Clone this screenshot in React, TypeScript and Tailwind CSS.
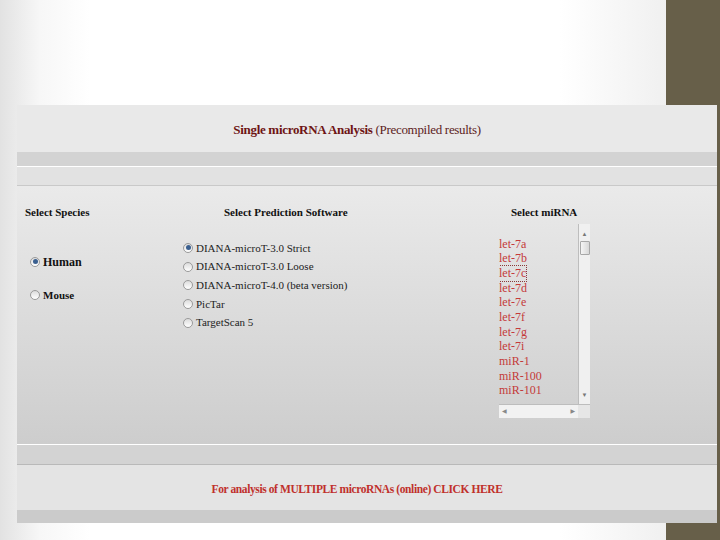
import React from 'react';

const serif = { fontFamily: '"Liberation Serif", "DejaVu Serif", serif' };

const Radio: React.FC<{ checked?: boolean }> = ({ checked }) => (
  <span className="inline-flex h-[10px] w-[10px] shrink-0 items-center justify-center rounded-full border border-[#9a9a9a] bg-[linear-gradient(#dcdcdc,#ffffff)]">
    {checked && <span className="h-[5px] w-[5px] rounded-full bg-[#3a5f8f]" />}
  </span>
);

const software = [
  'DIANA-microT-3.0 Strict',
  'DIANA-microT-3.0 Loose',
  'DIANA-microT-4.0 (beta version)',
  'PicTar',
  'TargetScan 5',
];

const mirnas = ['let-7a', 'let-7b', 'let-7c', 'let-7d', 'let-7e', 'let-7f', 'let-7g', 'let-7i', 'miR-1', 'miR-100', 'miR-101'];

const App: React.FC = () => {
  return (
    <div
      className="h-[540px] w-[720px] overflow-hidden bg-[linear-gradient(to_right,#e2e2e2_0px,#f7f7f7_40px,#ffffff_90px,#ffffff_560px,#f0f0f0_666px,#675f49_666px)] pt-[105px] pl-[17px]"
      style={serif}
    >
      <div className="w-[700px]">
        {/* header */}
        <div className="flex h-[47px] items-center justify-center bg-[#e9e9e9] pt-[3px] pr-[20px] text-[13px] tracking-[-0.3px] text-[#6e1414]">
          <span className="font-bold">Single microRNA Analysis</span>
          <span className="ml-[3px] text-[#5c1c1c]">(Precompiled results)</span>
        </div>
        <div className="h-[14px] bg-[#d3d3d3]" />
        <div className="h-[20px] border-t border-white border-b border-b-[#c9c9c9] bg-[#e2e2e2]" />

        {/* main */}
        <div className="flex h-[258px] bg-[linear-gradient(#eaeaea,#cdcdcd)] pt-[18px] text-[12px] text-[#111]">
          <div className="w-[166px] pl-[8px]">
            <div className="text-[11px] font-bold">Select Species</div>
            <div className="mt-[32px] flex items-center gap-[3px] pl-[5px] font-bold">
              <Radio checked />
              <span>Human</span>
            </div>
            <div className="mt-[16px] flex items-center gap-[3px] pl-[5px] text-[11px] font-bold">
              <Radio />
              <span>Mouse</span>
            </div>
          </div>

          <div className="w-[316px]">
            <div className="pl-[41px] text-[11px] font-bold">Select Prediction Software</div>
            <div className="mt-[18px] flex flex-col">
              {software.map((s, i) => (
                <div key={s} className="flex h-[18.7px] items-center gap-[3px] text-[11px] text-[#222]">
                  <Radio checked={i === 0} />
                  <span>{s}</span>
                </div>
              ))}
            </div>
          </div>

          <div className="flex flex-col">
            <div className="pl-[12px] text-[11px] font-bold">Select miRNA</div>
            <div className="mt-[3px] flex h-[194px] w-[91px] flex-col">
              <div className="flex h-[180px]">
                <div className="w-[79px] overflow-hidden pt-[13px]">
                  {mirnas.map((m, i) => (
                    <div
                      key={m}
                      className={
                        'h-[14.7px] w-fit text-[12px] leading-[14px] text-[#c43a3a] ' +
                        (i === 2 ? 'outline outline-1 outline-dotted outline-[#8a3a3a]' : '')
                      }
                    >
                      {m}
                    </div>
                  ))}
                </div>
                <div className="flex w-[12px] flex-col items-center border-l border-[#bdbdbd] bg-[#f0f0f0]">
                  <span className="mt-[7px] text-[6px] leading-none text-[#777]">▲</span>
                  <div className="mt-[4px] h-[14px] w-[10px] rounded-[1px] border border-[#a8a8a8] bg-[linear-gradient(to_right,#f5f5f5,#d8d8d8)]" />
                  <div className="flex-1" />
                  <span className="mb-[6px] text-[6px] leading-none text-[#777]">▼</span>
                </div>
              </div>
              <div className="flex h-[14px] border-t border-[#bdbdbd]">
                <div className="flex w-[79px] items-center justify-between bg-[#f2f2f2] px-[3px] text-[6px] text-[#888]">
                  <span>◀</span>
                  <span>▶</span>
                </div>
                <div className="w-[12px] bg-[#e6e6e6]" />
              </div>
            </div>
          </div>
        </div>

        <div className="h-[21px] border-t border-white border-b border-b-[#b9b9b9] bg-[#d3d3d3]" />

        {/* footer */}
        <div className="flex h-[45px] items-center justify-center bg-[#e4e4e4] pt-[4px] pr-[20px] text-[11.5px] font-bold tracking-[-0.4px] text-[#c0302c]">
          For analysis of MULTIPLE microRNAs (online) CLICK HERE
        </div>
        <div className="h-[13px] bg-[#cbcbcb]" />
      </div>
    </div>
  );
};

export default App;
